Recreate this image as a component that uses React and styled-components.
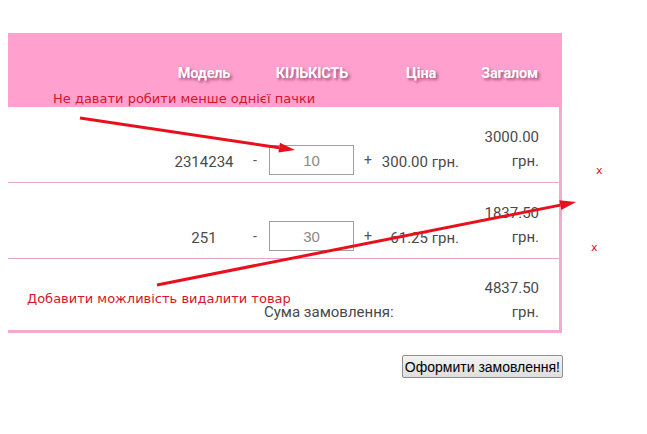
import React from "react";
import styled, { createGlobalStyle } from "styled-components";

const Global = createGlobalStyle`
  html, body { margin: 0; padding: 0; background: #fff; }
  body { margin: 8px; font-family: Roboto, "Noto Sans", sans-serif; }
`;

const Page = styled.div`
  position: relative;
  width: 631px;
  height: 418px;
  box-sizing: border-box;
  padding-top: 25px;
`;

const Cart = styled.div`
  width: 551px;
  border-right: 3px solid #f5a8d0;
  border-bottom: 3px solid #f5a8d0;
`;

const cols = "152px 88px 128px 90px 93px";

const Head = styled.div`
  display: grid;
  grid-template-columns: ${cols};
  height: 74px;
  margin-right: -3px;
  padding-right: 3px;
  background: #ffa0ce;
  align-items: center;
  padding-top: 6px;
  box-sizing: border-box;
`;

const HeadCell = styled.div`
  text-align: center;
  color: #fff;
  font-weight: 700;
  font-size: 14.5px;
  letter-spacing: -0.2px;
  text-shadow: 2px 2px 3px rgba(110, 30, 70, 0.65);
  padding-right: ${(p) => p.$pr || 0}px;
`;

const Row = styled.div`
  position: relative;
  display: grid;
  grid-template-columns: ${cols};
  height: ${(p) => p.$h || 76}px;
  box-sizing: border-box;
  border-bottom: ${(p) => (p.$last ? "none" : "1px solid #e6a6cb")};
  align-items: end;
  padding-bottom: ${(p) => p.$pb || 7}px;
  color: #4a4a4a;
  font-size: 15px;
`;

const Cell = styled.div`
  text-align: ${(p) => p.$align || "center"};
  padding-right: ${(p) => p.$pr || 0}px;
  padding-left: ${(p) => p.$pl || 0}px;
  padding-bottom: ${(p) => p.$pb || 0}px;
  line-height: 24px;
  grid-column: ${(p) => p.$span || "auto"};
  white-space: ${(p) => (p.$nowrap ? "nowrap" : "normal")};
`;

const Total = styled(Cell)`
  width: 60px;
  justify-self: end;
  margin-right: 20px;
  padding-bottom: 2px;
`;

const Qty = styled.div`
  display: flex;
  align-items: center;
  justify-content: center;
  gap: 10px;
  padding-right: 1px;
`;

const Sign = styled.span`
  font-size: 14px;
  color: #555;
  width: 8px;
  text-align: center;
`;

const QtyInput = styled.input`
  width: 85px;
  height: 30px;
  box-sizing: border-box;
  border: 1px solid #a0a0a0;
  text-align: center;
  font-family: "Liberation Sans", Arial, sans-serif;
  font-size: 15px;
  color: #8a8a8a;
  background: #fff;
  padding: 0;
  outline: none;
`;

const Remove = styled.span`
  position: absolute;
  left: ${(p) => p.$left}px;
  top: ${(p) => p.$top}px;
  color: #e0102a;
  font-family: "DejaVu Sans", Verdana, sans-serif;
  font-size: 11px;
`;

const Actions = styled.div`
  width: 555px;
  display: flex;
  justify-content: flex-end;
  margin-top: 22px;
`;

const Submit = styled.button`
  height: 23px;
  padding: 0 2px;
  font-family: "Liberation Sans", Arial, sans-serif;
  font-size: 14px;
  color: #000;
  background: linear-gradient(#f4f4f4, #dedede);
  border: 1px solid #8f8f8f;
  border-radius: 2px;
`;

const Note = styled.div`
  position: absolute;
  left: ${(p) => p.$left}px;
  top: ${(p) => p.$top}px;
  color: #d6142a;
  font-family: "DejaVu Sans", Verdana, sans-serif;
  font-size: 13px;
  white-space: nowrap;
`;

const Arrows = styled.svg`
  position: absolute;
  left: -8px;
  top: -8px;
  pointer-events: none;
`;

function Arrow({ x1, y1, x2, y2 }) {
  const ang = Math.atan2(y2 - y1, x2 - x1);
  const len = 16;
  const w = 5;
  const bx = x2 - len * Math.cos(ang);
  const by = y2 - len * Math.sin(ang);
  const px = -Math.sin(ang) * w;
  const py = Math.cos(ang) * w;
  return (
    <g>
      <line x1={x1} y1={y1} x2={bx} y2={by} stroke="#e8101c" strokeWidth="3" />
      <polygon
        points={`${x2},${y2} ${bx + px},${by + py} ${bx - px},${by - py}`}
        fill="#e8101c"
      />
    </g>
  );
}

export default function App() {
  return (
    <>
      <Global />
      <Page>
        <Cart>
          <Head>
            <HeadCell />
            <HeadCell>Модель</HeadCell>
            <HeadCell>КІЛЬКІСТЬ</HeadCell>
            <HeadCell>Ціна</HeadCell>
            <HeadCell $pr={6}>Загалом</HeadCell>
          </Head>
          <Row>
            <Cell />
            <Cell $pb={1}>2314234</Cell>
            <Qty>
              <Sign>-</Sign>
              <QtyInput defaultValue="10" />
              <Sign>+</Sign>
            </Qty>
            <Cell $align="right" $pr={7} $pb={1} $nowrap>300.00 грн.</Cell>
            <Total $align="right">3000.00 грн.</Total>
            <Remove $left={588} $top={57}>x</Remove>
          </Row>
          <Row>
            <Cell />
            <Cell $pb={1}>251</Cell>
            <Qty>
              <Sign>-</Sign>
              <QtyInput defaultValue="30" />
              <Sign>+</Sign>
            </Qty>
            <Cell $align="right" $pr={7} $pb={1} $nowrap>61.25 грн.</Cell>
            <Total $align="right">1837.50 грн.</Total>
            <Remove $left={583} $top={58}>x</Remove>
          </Row>
          <Row $last $h={71} $pb={4}>
            <Cell />
            <Cell />
            <Cell $span="3 / 5" $align="left" $pl={16} $pb={2} $nowrap>
              Сума замовлення:
            </Cell>
            <Total $align="right">4837.50 грн.</Total>
          </Row>
        </Cart>
        <Actions>
          <Submit>Оформити замовлення!</Submit>
        </Actions>
        <Note $left={45} $top={83}>Не давати робити менше однієї пачки</Note>
        <Note $left={19} $top={283}>Добавити можливість видалити товар</Note>
        <Arrows width="647" height="434" viewBox="0 0 647 434">
          <Arrow x1={80} y1={118} x2={295} y2={150} />
          <Arrow x1={157} y1={285} x2={576} y2={202} />
        </Arrows>
      </Page>
    </>
  );
}
